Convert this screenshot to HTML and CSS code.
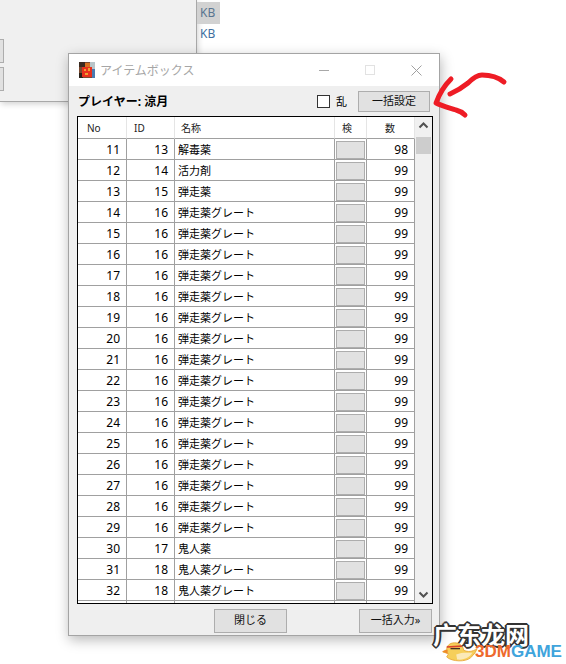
FILE: index.html
```html
<!DOCTYPE html>
<html>
<head>
<meta charset="utf-8" />
<title>アイテムボックス</title>
<link rel="stylesheet" href="styles.css">
</head>
<body>

<div class="backwin">
	<div class="backbtn"></div>
	<div class="backbtn"></div>
</div>

<div class="kblist">
	<div class="kb kb-on">KB</div>
	<div class="kb">KB</div>
</div>

<div class="dialog">
	<div class="titlebar">
		<svg class="appicon" width="16" height="16" viewBox="0 0 16 16">
			<rect width="16" height="16" fill="#7a4a30"/>
			<rect x="0" y="0" width="6" height="5" fill="#3a2a20"/>
			<rect x="11" y="0" width="5" height="7" fill="#b8c4c8"/>
			<rect x="13" y="7" width="3" height="9" fill="#4a7ab0"/>
			<rect x="0" y="11" width="4" height="5" fill="#2a2018"/>
			<rect x="6" y="1" width="5" height="4" fill="#d87020"/>
			<rect x="3" y="5" width="10" height="10" fill="#e8301c"/>
			<rect x="5" y="7" width="2" height="2" fill="#f0a030"/>
			<rect x="9" y="6" width="2" height="3" fill="#f0a030"/>
			<rect x="6" y="11" width="3" height="2" fill="#f0a030"/>
		</svg>
		<span class="title">アイテムボックス</span>
		<div class="winbtns">
			<span class="winbtn"><svg width="10" height="10" viewBox="0 0 10 10"><path d="M0 5.5H10" stroke="#a8a8a8"/></svg></span>
			<span class="winbtn"><svg width="10" height="10" viewBox="0 0 10 10"><rect x="0.5" y="0.5" width="9" height="9" fill="none" stroke="#e2e2e2"/></svg></span>
			<span class="winbtn"><svg width="11" height="11" viewBox="0 0 11 11"><path d="M0.5 0.5L10.5 10.5M10.5 0.5L0.5 10.5" stroke="#a0a0a0"/></svg></span>
		</div>
	</div>

	<div class="toolbar">
		<span class="player">プレイヤー: 涼月</span>
		<span class="check"></span>
		<span class="checklabel">乱</span>
		<div class="btn btn-set">一括設定</div>
	</div>

	<div class="listbox">
		<div class="listview">
			<table class="items">
				<colgroup>
					<col class="c-no"><col class="c-id"><col class="c-name"><col class="c-chk"><col class="c-num">
				</colgroup>
				<thead>
					<tr><th class="h-no">No</th><th class="h-id">ID</th><th class="h-name">名称</th><th class="h-chk">検</th><th class="h-num">数</th></tr>
				</thead>
				<tbody>
					<tr><td class="n">11</td><td class="n">13</td><td class="name">解毒薬</td><td class="box"><i></i></td><td class="n">98</td></tr>
					<tr><td class="n">12</td><td class="n">14</td><td class="name">活力剤</td><td class="box"><i></i></td><td class="n">99</td></tr>
					<tr><td class="n">13</td><td class="n">15</td><td class="name">弾走薬</td><td class="box"><i></i></td><td class="n">99</td></tr>
					<tr><td class="n">14</td><td class="n">16</td><td class="name">弾走薬グレート</td><td class="box"><i></i></td><td class="n">99</td></tr>
					<tr><td class="n">15</td><td class="n">16</td><td class="name">弾走薬グレート</td><td class="box"><i></i></td><td class="n">99</td></tr>
					<tr><td class="n">16</td><td class="n">16</td><td class="name">弾走薬グレート</td><td class="box"><i></i></td><td class="n">99</td></tr>
					<tr><td class="n">17</td><td class="n">16</td><td class="name">弾走薬グレート</td><td class="box"><i></i></td><td class="n">99</td></tr>
					<tr><td class="n">18</td><td class="n">16</td><td class="name">弾走薬グレート</td><td class="box"><i></i></td><td class="n">99</td></tr>
					<tr><td class="n">19</td><td class="n">16</td><td class="name">弾走薬グレート</td><td class="box"><i></i></td><td class="n">99</td></tr>
					<tr><td class="n">20</td><td class="n">16</td><td class="name">弾走薬グレート</td><td class="box"><i></i></td><td class="n">99</td></tr>
					<tr><td class="n">21</td><td class="n">16</td><td class="name">弾走薬グレート</td><td class="box"><i></i></td><td class="n">99</td></tr>
					<tr><td class="n">22</td><td class="n">16</td><td class="name">弾走薬グレート</td><td class="box"><i></i></td><td class="n">99</td></tr>
					<tr><td class="n">23</td><td class="n">16</td><td class="name">弾走薬グレート</td><td class="box"><i></i></td><td class="n">99</td></tr>
					<tr><td class="n">24</td><td class="n">16</td><td class="name">弾走薬グレート</td><td class="box"><i></i></td><td class="n">99</td></tr>
					<tr><td class="n">25</td><td class="n">16</td><td class="name">弾走薬グレート</td><td class="box"><i></i></td><td class="n">99</td></tr>
					<tr><td class="n">26</td><td class="n">16</td><td class="name">弾走薬グレート</td><td class="box"><i></i></td><td class="n">99</td></tr>
					<tr><td class="n">27</td><td class="n">16</td><td class="name">弾走薬グレート</td><td class="box"><i></i></td><td class="n">99</td></tr>
					<tr><td class="n">28</td><td class="n">16</td><td class="name">弾走薬グレート</td><td class="box"><i></i></td><td class="n">99</td></tr>
					<tr><td class="n">29</td><td class="n">16</td><td class="name">弾走薬グレート</td><td class="box"><i></i></td><td class="n">99</td></tr>
					<tr><td class="n">30</td><td class="n">17</td><td class="name">鬼人薬</td><td class="box"><i></i></td><td class="n">99</td></tr>
					<tr><td class="n">31</td><td class="n">18</td><td class="name">鬼人薬グレート</td><td class="box"><i></i></td><td class="n">99</td></tr>
					<tr><td class="n">32</td><td class="n">18</td><td class="name">鬼人薬グレート</td><td class="box"><i></i></td><td class="n">99</td></tr>
					<tr><td class="n"></td><td class="n"></td><td class="name"></td><td></td><td class="n"></td></tr>
				</tbody>
			</table>
		</div>
		<div class="scrollbar">
			<svg width="17" height="17" viewBox="0 0 17 17"><path d="M4.5 10.5L8.5 6.5L12.5 10.5" fill="none" stroke="#505050" stroke-width="2"/></svg>
			<div class="thumb"></div>
			<svg class="arrow-down" width="17" height="17" viewBox="0 0 17 17"><path d="M4.5 6.5L8.5 10.5L12.5 6.5" fill="none" stroke="#505050" stroke-width="2"/></svg>
		</div>
	</div>

	<div class="footer">
		<div class="btn btn-foot">閉じる</div>
		<div class="btn btn-foot">一括入力»</div>
	</div>
</div>

<!-- red arrow drawn over the screenshot -->
<svg class="scribble" width="566" height="664" viewBox="0 0 566 664">
	<path d="M451 79C446 84 440 92 436 103C442 106 450 108 456 110C460 111 463 113 465 115" fill="none" stroke="#ee1c25" stroke-width="5" stroke-linecap="round" stroke-linejoin="round"/>
	<path d="M450 94C457 91 463 87 468 83C473 78 477 75 482 75C490 75 498 77 504 82" fill="none" stroke="#ee1c25" stroke-width="5" stroke-linecap="round" stroke-linejoin="round"/>
</svg>

<div class="watermark">
	<div class="wm-cn">广东龙网</div>
	<svg class="duck" width="38" height="20" viewBox="0 0 40 24" preserveAspectRatio="none">
		<path d="M2 12L8 14L6 18C12 24 26 24 31 19C35 15 37 11 38 8C33 12 28 12 24 10C23 4 19 1 14 1C9 1 6 5 6 9Z" fill="#f6cf5a" stroke="#e8a93a"/>
		<path d="M16 15C22 12 28 13 33 13C30 19 24 22 17 21Z" fill="#fbe9b8"/>
		<path d="M6 6L22 5" stroke="#d8402a" stroke-width="2"/>
		<path d="M10 8H20" stroke="#3a2a20" stroke-width="1.5"/>
		<path d="M1 11L7 9L7 14Z" fill="#ee8a2a"/>
	</svg>
	<div class="wm-en"><span class="wm-3dm">3DM</span><span class="wm-game">GAME</span></div>
</div>

</body>
</html>
```

FILE: styles.css
```css
html, body{
	margin: 0;
	padding: 0;
	width: 566px;
	height: 664px;
	overflow: hidden;
	background: #fff;
	font-family: "Noto Sans", "Noto Sans CJK JP", sans-serif;
	font-size: 11px;
	color: #000;
}

body{
	position: relative;
}

/* window behind the dialog */
.backwin{
	position: absolute;
	left: 0;
	top: 0;
	box-sizing: border-box;
	width: 197px;
	height: 102px;
	padding-top: 39px;
	background: #f0f0f0;
	border-right: 1px solid #a8a8a8;
	border-bottom: 1px solid #a8a8a8;
	box-shadow: 1px 2px 6px rgba(0,0,0,0.18);
	display: flex;
	flex-direction: column;
	gap: 4px;
}

.backbtn{
	box-sizing: border-box;
	width: 4px;
	height: 24px;
	background: #e1e1e1;
	border: 1px solid #adadad;
	border-left: 0;
}

.kblist{
	position: absolute;
	left: 197px;
	top: 2px;
	width: 23px;
}

.kb{
	height: 19px;
	line-height: 19px;
	padding-left: 3px;
	font-size: 12px;
	color: #3f6f9f;
}

.kb-on{
	height: 22px;
	line-height: 22px;
	background: #d2d2d2;
	color: #5a7590;
}

/* main dialog */
.dialog{
	position: absolute;
	left: 68px;
	top: 53px;
	box-sizing: border-box;
	width: 372px;
	height: 583px;
	background: #efefef;
	border: 1px solid #a4a4a4;
	box-shadow: 1px 4px 12px rgba(0,0,0,0.28);
	display: flex;
	flex-direction: column;
}

.titlebar{
	height: 32px;
	background: #fff;
	display: flex;
	align-items: center;
	padding-left: 10px;
}

.appicon{
	margin-right: 5px;
}

.title{
	font-size: 12px;
	color: #a6a6a6;
}

.winbtns{
	margin-left: auto;
	display: flex;
}

.winbtn{
	width: 46px;
	height: 32px;
	display: flex;
	align-items: center;
	justify-content: center;
}

.toolbar{
	height: 30px;
	display: flex;
	align-items: center;
	padding: 0 9px;
}

.player{
	font-size: 12px;
	font-weight: bold;
}

.check{
	box-sizing: border-box;
	width: 13px;
	height: 13px;
	margin-left: auto;
	margin-right: 6px;
	background: #fff;
	border: 1px solid #333;
}

.checklabel{
	margin-right: 11px;
}

.btn{
	box-sizing: border-box;
	background: #e1e1e1;
	border: 1px solid #adadad;
	text-align: center;
	color: #111;
}

.btn-set{
	width: 72px;
	height: 21px;
	line-height: 18px;
}

.btn-foot{
	width: 73px;
	height: 24px;
	line-height: 20px;
}

/* list */
.listbox{
	box-sizing: border-box;
	width: 356px;
	height: 488px;
	margin-left: 8px;
	border: 1px solid #000;
	display: flex;
	overflow: hidden;
}

.listview{
	width: 337px;
	background: #fff;
	overflow: hidden;
}

.items{
	width: 337px;
	table-layout: fixed;
	border-collapse: separate;
	border-spacing: 0;
}

.c-no{ width: 49px; }
.c-id{ width: 48px; }
.c-name{ width: 160px; }
.c-chk{ width: 32px; }
.c-num{ width: 48px; }

.items th{
	box-sizing: border-box;
	height: 22px;
	padding: 0;
	font-size: 10px;
	font-weight: normal;
	line-height: 14px;
	text-align: left;
	color: #222;
	border-right: 1px solid #e5e5e5;
	border-bottom: 1px solid #a0a0a0;
}

.h-no{ padding-left: 9px !important; }
.h-id{ padding-left: 7px !important; }
.h-name{ padding-left: 6px !important; }
.h-chk{ padding-left: 7px !important; }
.h-num{ padding-left: 18px !important; }

.items td{
	box-sizing: border-box;
	height: 21px;
	padding: 1px 0 0;
	line-height: 14px;
	border-right: 1px solid #a0a0a0;
	border-bottom: 1px solid #a0a0a0;
}

.items td.n{
	padding-right: 6px;
	text-align: right;
	font-size: 12px;
}

.items td.name{
	padding-left: 3px;
	font-size: 11px;
}

.items td.box{
	padding: 1px 1px 0;
}

.items td.box i{
	display: block;
	box-sizing: border-box;
	height: 18px;
	background: #e1e1e1;
	border: 1px solid #adadad;
}

.scrollbar{
	width: 17px;
	background: #f0f0f0;
	display: flex;
	flex-direction: column;
}

.thumb{
	width: 15px;
	height: 17px;
	margin: 3px 1px 0;
	background: #cdcdcd;
}

.arrow-down{
	margin-top: auto;
}

.footer{
	display: flex;
	justify-content: space-between;
	padding: 5px 7px 0 145px;
}

/* stuff on top of the picture */
.scribble{
	position: absolute;
	left: 0;
	top: 0;
}

.watermark{
	position: absolute;
	left: 433px;
	top: 622px;
	width: 130px;
	height: 38px;
}

.duck{
	position: absolute;
	left: 8px;
	top: 20px;
}

.wm-cn{
	position: absolute;
	left: 0;
	top: 0;
	font-family: "Noto Sans CJK SC", sans-serif;
	font-size: 24px;
	font-weight: bold;
	line-height: 23px;
	color: #fff;
	text-shadow: 2px 0 0 #333, -2px 0 0 #333, 0 2px 0 #333, 0 -2px 0 #333, 1px 1px 0 #333, -1px 1px 0 #333, 1px -1px 0 #333, -1px -1px 0 #333;
	white-space: nowrap;
}

.wm-en{
	position: absolute;
	left: 42px;
	top: 23px;
	font-family: "Liberation Sans", sans-serif;
	font-size: 17px;
	font-weight: bold;
	line-height: 13px;
	white-space: nowrap;
}

.wm-3dm{
	color: #ee6a2c;
}

.wm-game{
	color: #3fa4dc;
}
```
